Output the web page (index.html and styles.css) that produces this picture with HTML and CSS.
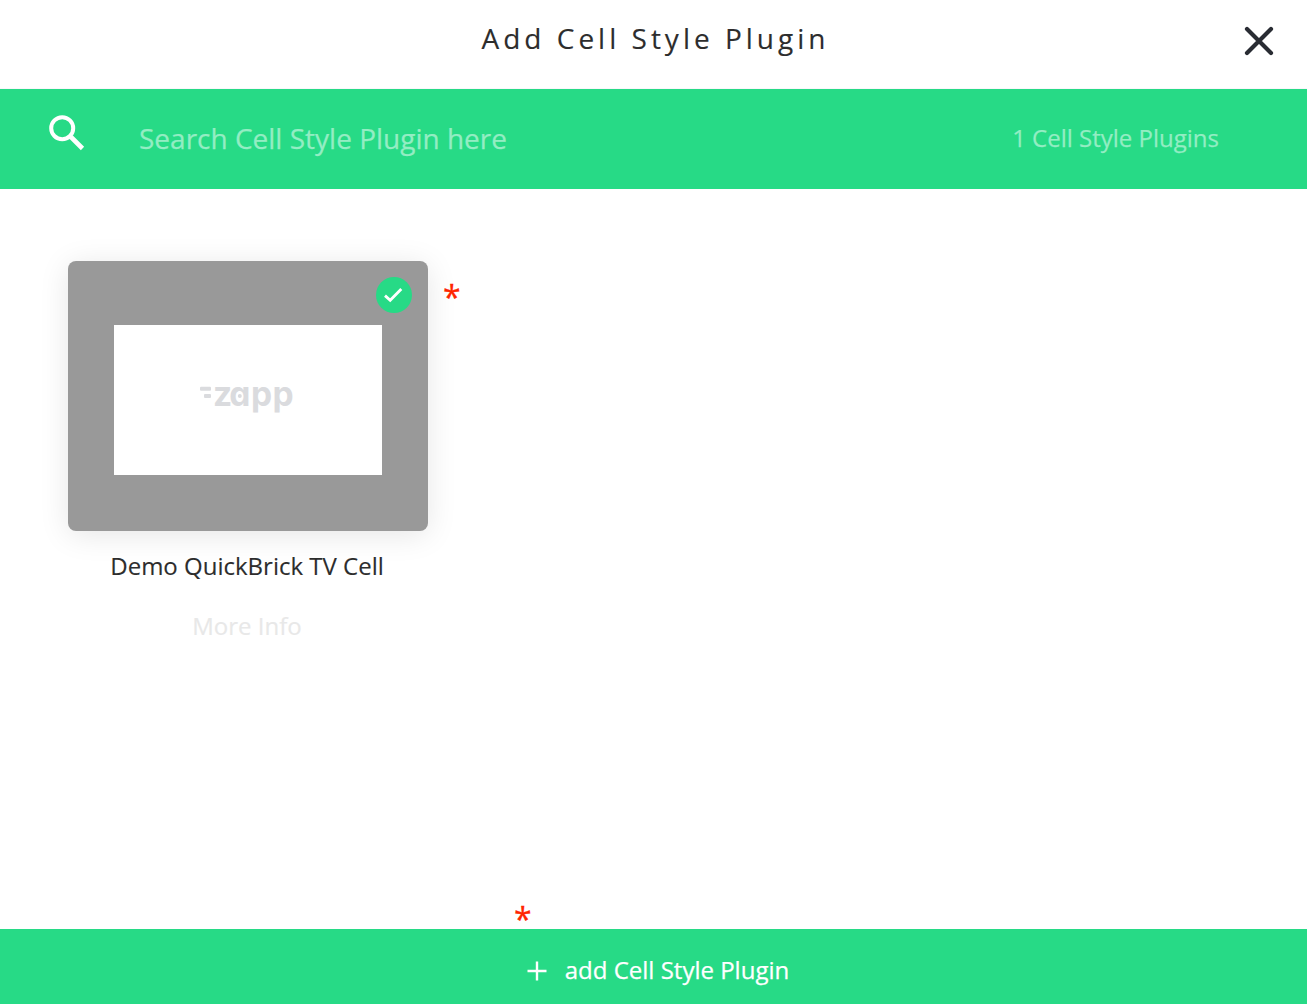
FILE: index.html
```html
<!DOCTYPE html>
<html lang="en">
<head>
<meta charset="utf-8">
<title>Add Cell Style Plugin</title>
<link rel="stylesheet" href="styles.css">
</head>
<body>
<div class="dialog">
  <header class="header">
    <h1 class="title">Add Cell Style Plugin</h1>
    <button class="close" aria-label="Close">
      <svg width="30" height="30" viewBox="0 0 30 30"><path d="M3 3L27 27M27 3L3 27" stroke="#292c33" stroke-width="4.2" stroke-linecap="round"/></svg>
    </button>
  </header>
  <div class="search">
    <svg class="search-icon" width="36" height="36" viewBox="0 0 36 36" fill="none" stroke="#fff"><circle cx="13.2" cy="13.2" r="11" stroke-width="4"/><path d="M22 22L33.5 33.5" stroke-width="4.6"/></svg>
    <span class="placeholder">Search Cell Style Plugin here</span>
    <span class="count">1 Cell Style Plugins</span>
  </div>
  <main class="content">
    <article class="plugin">
      <div class="card">
        <div class="preview">
          <svg class="logo" width="110" height="44" viewBox="0 -12 110 44" fill="#dadbde">
            <rect x="0" y="4.8" width="11" height="4" rx="1"/>
            <rect x="4" y="12" width="7" height="4" rx="1"/>
            <text class="logo-text" x="13 29.2 51 72.6" y="23.6">zapp</text>
            <circle cx="39.8" cy="14" r="2"/>
          </svg>
        </div>
        <svg class="check" width="36" height="36" viewBox="0 0 36 36"><circle cx="18" cy="18" r="18" fill="#27da86"/><path d="M9 18.6L14.2 23.3L25.3 11.9" fill="none" stroke="#fff" stroke-width="2.8"/></svg>
      </div>
      <div class="name">Demo QuickBrick TV Cell</div>
      <div class="more">More Info</div>
    </article>
    <span class="required">*</span>
  </main>
  <div class="note"><span class="required">*</span></div>
  <footer class="footer">
    <svg class="plus" width="20" height="20" viewBox="0 0 20 20"><path d="M10 .5V19.5M.5 10H19.5" stroke="#fff" stroke-width="2.4"/></svg>
    <span class="add-label">add Cell Style Plugin</span>
  </footer>
</div>
</body>
</html>
```

FILE: styles.css
```css
* { box-sizing: border-box; }
body { margin: 0; background: #fff; font-family: "Open Sans", sans-serif; color: #2d2d2d; }
svg { display: block; }
.dialog { display: flex; flex-direction: column; height: 1004px; overflow: hidden; -webkit-text-stroke: .12px; }
.header { display: grid; grid-template-columns: 80px 1fr 80px; height: 89px; padding-top: 18px; border-bottom: 1px solid #f9f7fb; }
.title { grid-column: 2; margin: 0; padding-left: 4px; font-size: 28px; font-weight: 400; line-height: 40px; letter-spacing: 4px; text-align: center; white-space: nowrap; }
.close { width: 30px; height: 30px; margin: 8px 0 0 17px; padding: 0; border: 0; background: none; }
.search { display: flex; align-items: flex-start; height: 100px; padding: 26px 88px 0 49px; background: #27da86; color: #93edc3; white-space: nowrap; -webkit-text-stroke: .25px; }
.placeholder { margin-left: 54px; font-size: 28px; line-height: 46px; }
.count { margin-left: auto; font-size: 24px; line-height: 46px; }
.content { display: flex; flex: 1; align-items: flex-start; padding: 72px 68px 0; }
.plugin { width: 360px; text-align: center; }
.card { display: flex; justify-content: center; position: relative; height: 270px; padding-top: 64px; border-radius: 8px; background: #999; box-shadow: 0 4px 30px rgba(0, 0, 0, .1); }
.preview { width: 268px; height: 150px; padding: 45px 0 0 86px; background: #fff; }
.logo { overflow: visible; -webkit-text-stroke: 0; }
.logo-text { font-family: Inter, sans-serif; font-size: 33.5px; font-weight: 700; font-feature-settings: "cv11"; }
.check { position: absolute; top: 16px; right: 16px; }
.name { padding-right: 2px; margin-top: 18px; font-size: 24px; line-height: 34px; white-space: nowrap; }
.more { padding-right: 2px; margin-top: 26px; font-size: 24px; line-height: 34px; color: #e8e8e8; }
.required { color: #ff2600; font-size: 32px; line-height: 40px; -webkit-text-stroke: .3px; }
.content .required { margin: 16px 0 0 15px; }
.note { height: 30px; padding-left: 514px; }
.note .required { display: block; }
.footer { display: flex; align-items: center; justify-content: center; gap: 18px; height: 75px; padding: 6px 0 0 9px; background: #27da86; color: #fff; font-size: 24px; -webkit-text-stroke: .25px; }
.plus { margin-top: 2px; }
```
